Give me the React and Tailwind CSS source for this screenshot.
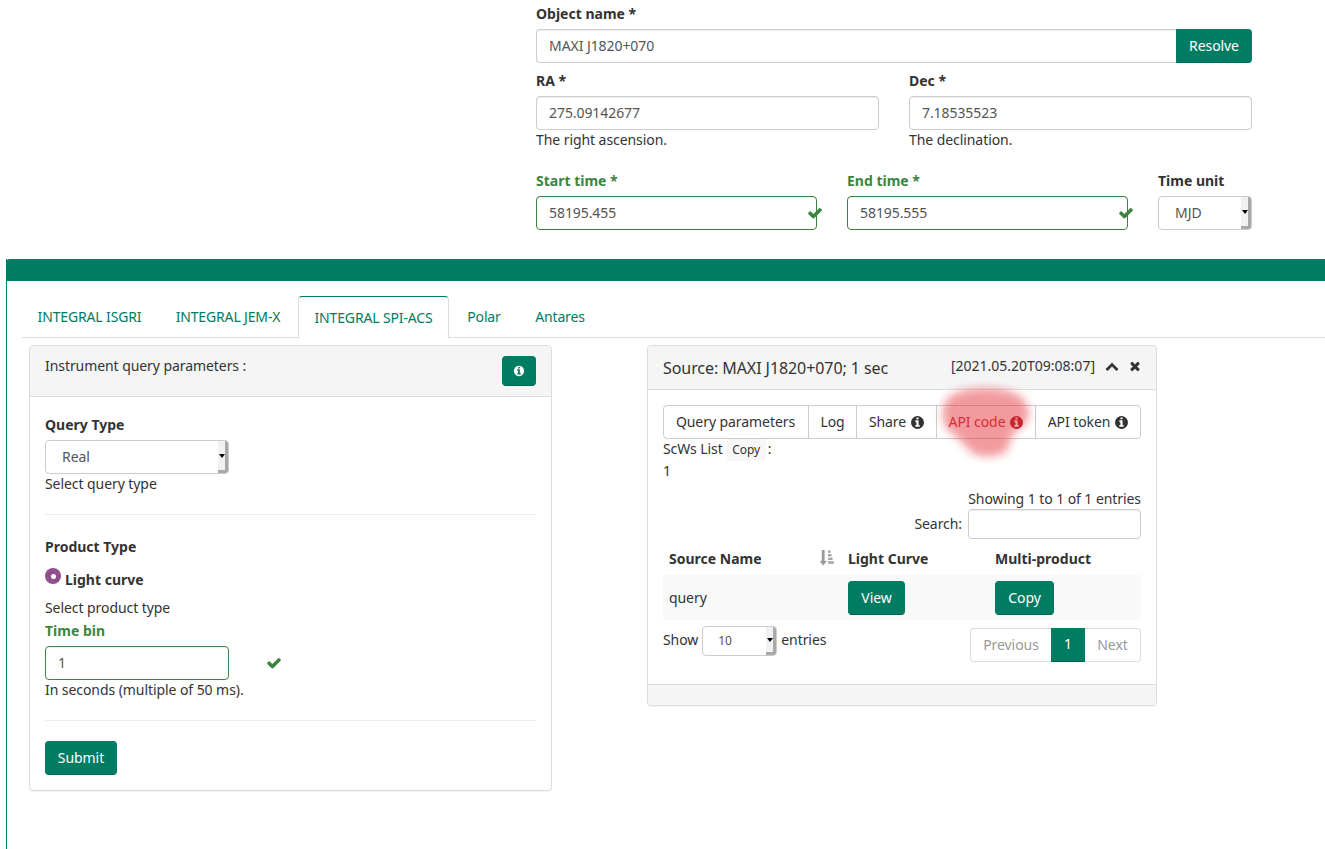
import React from "react";

const inputBase = "rounded-[4px] bg-white px-3 pb-[2px] text-[14px] tracking-[-0.07px] text-[#555] shadow-[inset_0_1px_1px_rgba(0,0,0,0.075)] outline-none";
const inputCls = "h-[34px] border border-[#ccc] " + inputBase;
const okInputCls = "h-[34px] border border-[#3c8541] " + inputBase;
const btnCls = "flex items-center justify-center rounded-[4px] border border-[#007c63] border-b-[#00664f] bg-[#007c63] text-[14px] tracking-[-0.07px] text-white";

const INFO = "M1152 1376v-160q0-14-9-23t-23-9h-96v-512q0-14-9-23t-23-9h-320q-14 0-23 9t-9 23v160q0 14 9 23t23 9h96v320h-96q-14 0-23 9t-9 23v160q0 14 9 23t23 9h448q14 0 23-9t9-23zm-128-896v-160q0-14-9-23t-23-9h-192q-14 0-23 9t-9 23v160q0 14 9 23t23 9h192q14 0 23-9t9-23zm640 416q0 209-103 385.5t-279.5 279.5-385.5 103-385.5-103-279.5-279.5-103-385.5 103-385.5 279.5-279.5 385.5-103 385.5 103 279.5 279.5 103 385.5z";
const CHEVRON = "M1683 1331l-166 165q-19 19-45 19t-45-19l-531-531-531 531q-19 19-45 19t-45-19l-166-165q-19-19-19-45.5t19-45.5l742-741q19-19 45-19t45 19l742 741q19 19 19 45.5t-19 45.5z";
const TIMES = "M1490 1322q0 40-28 68l-136 136q-28 28-68 28t-68-28l-294-294-294 294q-28 28-68 28t-68-28l-136-136q-28-28-28-68t28-68l294-294-294-294q-28-28-28-68t28-68l136-136q28-28 68-28t68 28l294 294 294-294q28-28 68-28t68 28l136 136q28 28 28 68t-28 68l-294 294 294 294q28 28 28 68z";
const CHECK = "M1671 566q0 40-28 68l-724 724-136 136q-28 28-68 28t-68-28l-136-136-362-362q-28-28-28-68t28-68l136-136q28-28 68-28t68 28l294 295 656-657q28-28 68-28t68 28l136 136q28 28 28 68z";

function Fa({ d, size = 14, className = "" }) {
  return (
    <svg width={size} height={size} viewBox="0 0 1792 1792" fill="currentColor" className={"shrink-0 " + className}>
      <path d={d} />
    </svg>
  );
}

function Field({ label, children, className = "", green = false }) {
  return (
    <div className={"flex flex-col " + className}>
      <label className={"mb-[5px] h-5 font-bold leading-5 " + (green ? "text-[#3c8541]" : "")}>{label}</label>
      {children}
    </div>
  );
}

function FakeSelect({ value, className = "", textClass = "pl-4 text-[14px]" }) {
  return (
    <div className={"flex items-stretch justify-between rounded-[4px] border border-[#ccc] bg-white text-[#555] tracking-[-0.07px] " + className}>
      <span className={"self-center " + textClass}>{value}</span>
      <span className="flex w-[10px] items-center justify-center rounded-r-[3px] border-r-[3px] border-b-[3px] border-[#a8a8a8] bg-[#f1f1f1]">
        <span className="h-0 w-0 border-x-[3px] border-t-[4px] border-x-transparent border-t-black" />
      </span>
    </div>
  );
}

function SortIcon() {
  return (
    <svg width="14" height="16" viewBox="0 0 14 16" fill="#a8a8a8" className="mb-[3px]">
      <path d="M1.8 0h2.8v11H7l-3.8 4.5L-.5 11h2.3z" fill="#9a9a9a" />
      <rect x="8" y="0.5" width="2.6" height="2.4" />
      <rect x="8" y="4" width="3.6" height="2.4" />
      <rect x="8" y="7.6" width="4.6" height="2.4" />
      <rect x="8" y="11.2" width="6" height="2.6" />
    </svg>
  );
}

export default function App() {
  return (
    <div className="relative h-[849px] w-[1325px] overflow-hidden bg-white text-[14px] leading-5 text-[#333] [font-family:'Noto_Sans','Open_Sans',sans-serif]">
      {/* Top form */}
      <div className="ml-[536px] flex h-[259px] w-[716px] flex-col pt-1">
        <Field label="Object name *">
          <div className="flex">
            <input readOnly value="MAXI J1820+070" className={inputCls + " min-w-0 flex-1 rounded-r-none border-r-0"} />
            <button className={btnCls + " w-[76px] rounded-l-none"}>Resolve</button>
          </div>
        </Field>
        <div className="mt-[8px] flex gap-[30px]">
          <Field label="RA *" className="flex-1">
            <input readOnly value="275.09142677" className={inputCls} />
            <span className="tracking-[-0.07px]">The right ascension.</span>
          </Field>
          <Field label="Dec *" className="flex-1">
            <input readOnly value="7.18535523" className={inputCls} />
            <span className="tracking-[-0.07px]">The declination.</span>
          </Field>
        </div>
        <div className="mt-[21px] flex gap-[30px]">
          <Field label="Start time *" green className="relative w-[281px]">
            <input readOnly value="58195.455" className={okInputCls} />
            <Fa d={CHECK} size={16} className="absolute right-[-6px] top-[34px] text-[#3c8541]" />
          </Field>
          <Field label="End time *" green className="relative w-[281px]">
            <input readOnly value="58195.555" className={okInputCls} />
            <Fa d={CHECK} size={16} className="absolute right-[-6px] top-[34px] text-[#3c8541]" />
          </Field>
          <Field label="Time unit" className="w-[94px]">
            <FakeSelect value="MJD" className="h-[34px]" />
          </Field>
        </div>
      </div>

      {/* Main panel */}
      <div className="ml-[6px] flex h-[590px] flex-col border-l border-[#007c63]">
        <div className="-ml-px h-[22px] shrink-0 rounded-tl-[4px] bg-[#007c63]" />
        <div className="ml-[15px] mt-[15px] flex h-[42px] shrink-0 border-b border-[#ddd] tracking-[-0.15px] text-[#007c63]">
          <div className="mr-[2px] flex h-[41px] w-[135px] items-center justify-center">INTEGRAL ISGRI</div>
          <div className="mr-[1px] flex h-[41px] w-[138px] items-center justify-center">INTEGRAL JEM-X</div>
          <div className="mr-[2px] flex h-[42px] w-[151px] items-center justify-center rounded-t-[4px] border border-b-0 border-[#ddd] border-t-[#007c63] bg-white">INTEGRAL SPI-ACS</div>
          <div className="mr-[2px] flex h-[41px] w-[66px] items-center justify-center">Polar</div>
          <div className="flex h-[41px] w-[82px] items-center justify-center">Antares</div>
        </div>

        <div className="ml-[22px] mt-[7px] flex items-start">
          {/* Left panel */}
          <div className="h-[446px] w-[523px] shrink-0 rounded-[4px] border border-[#ddd] bg-white shadow-[0_1px_1px_rgba(0,0,0,0.05)]">
            <div className="flex h-[51px] items-start justify-between rounded-t-[3px] border-b border-[#ddd] bg-[#f5f5f5] pl-[15px] pr-[15px] pt-[10px]">
              <span className="tracking-[-0.07px]">Instrument query parameters :</span>
              <button className={btnCls + " h-[30px] w-[34px]"}><Fa d={INFO} size={12} /></button>
            </div>
            <div className="flex flex-col px-[15px] pt-[18px]">
              <label className="mb-[5px] h-5 font-bold">Query Type</label>
              <FakeSelect value="Real" className="h-[34px] w-[184px]" />
              <span className="tracking-[-0.07px]">Select query type</span>
              <hr className="mt-[20px] border-[#eee]" />
              <label className="mt-[22px] h-5 font-bold">Product Type</label>
              <div className="mt-[13px] flex h-5 items-start">
                <span className="mt-[-2px] flex h-4 w-4 items-center justify-center rounded-full bg-[#8f4f8c]">
                  <span className="h-[5px] w-[5px] rounded-full bg-white" />
                </span>
                <span className="ml-1 font-bold">Light curve</span>
              </div>
              <span className="mt-[8px] tracking-[-0.07px]">Select product type</span>
              <label className="mb-[5px] mt-[3px] h-5 font-bold text-[#3c8541]">Time bin</label>
              <div className="flex items-center">
                <input readOnly value="1" className={okInputCls + " w-[184px]"} />
                <Fa d={CHECK} size={16} className="ml-[37px] text-[#3c8541]" />
              </div>
              <span className="tracking-[-0.07px]">In seconds (multiple of 50 ms).</span>
              <hr className="mt-[20px] border-[#eee]" />
              <button className={btnCls + " mt-[20px] h-[34px] w-[72px]"}>Submit</button>
            </div>
          </div>

          {/* Right panel */}
          <div className="relative ml-[95px] h-[361px] w-[510px] shrink-0 rounded-[4px] border border-[#ddd] bg-white shadow-[0_1px_1px_rgba(0,0,0,0.05)]">
            <div className="flex h-[44px] items-start justify-between rounded-t-[3px] border-b border-[#ddd] bg-[#f5f5f5] pl-[15px] pr-[14px]">
              <span className="mt-[11px] text-[16px] leading-[22px] tracking-[-0.07px]">Source: MAXI J1820+070; 1 sec</span>
              <div className="mt-[10px] flex items-center">
                <span>[2021.05.20T09:08:07]</span>
                <Fa d={CHEVRON} size={14} className="ml-[10px]" />
                <Fa d={TIMES} size={14} className="ml-[9px]" />
              </div>
            </div>
            <div className="flex h-[294px] flex-col px-[15px] pt-[15px] tracking-[-0.07px]">
              <div className="flex h-[34px] w-[478px] shrink-0 rounded-[4px] border border-[#ccc] bg-white">
                <span className="flex w-[145px] items-center justify-center border-r border-[#ccc] pr-[1px]">Query parameters</span>
                <span className="flex w-[48px] items-center justify-center border-r border-[#ccc]">Log</span>
                <span className="flex w-[80px] items-center justify-center gap-1 border-r border-[#ccc] pl-[1px]">Share <Fa d={INFO} size={15} /></span>
                <span className="flex w-[99px] items-center justify-center gap-1 border-r border-[#ccc] pl-[1px] text-[#d0333a]">API code <Fa d={INFO} size={15} className="text-[#b3282f]" /></span>
                <span className="flex flex-1 items-center justify-center gap-1 pl-[1px]">API token <Fa d={INFO} size={15} /></span>
              </div>
              <div className="flex h-[22px] items-start">
                <span>ScWs List</span>
                <span className="ml-[4px] flex h-[22px] w-[39px] items-center justify-center rounded-[3px] bg-[#f7f7f7] text-[12px]">Copy</span>
                <span className="ml-[2px]">:</span>
              </div>
              <span>1</span>
              <span className="mt-[8px] self-end">Showing 1 to 1 of 1 entries</span>
              <div className="flex items-center justify-end">
                <span className="mr-[6px]">Search:</span>
                <input readOnly className={"h-[30px] w-[173px] border border-[#ccc] " + inputBase} />
              </div>
              <div className="grid h-[36px] grid-cols-[185px_147px_146px] items-end pb-[6px] font-bold tracking-normal">
                <div className="flex items-center justify-between pl-[6px] pr-[14px]">
                  <span>Source Name</span>
                  <SortIcon />
                </div>
                <span>Light Curve</span>
                <span>Multi-product</span>
              </div>
              <div className="grid h-[45px] grid-cols-[185px_147px_146px] items-center bg-[#f9f9f9]">
                <span className="pl-[6px]">query</span>
                <button className={btnCls + " h-[34px] w-[57px]"}>View</button>
                <button className={btnCls + " h-[34px] w-[59px]"}>Copy</button>
              </div>
              <div className="mt-[6px] flex items-start justify-between">
                <div className="flex items-center">
                  <span className="pb-[2px]">Show</span>
                  <FakeSelect value="10" className="ml-[4px] h-[30px] w-[75px]" textClass="pl-[15px] text-[12px]" />
                  <span className="ml-[4px] pb-[2px]">entries</span>
                </div>
                <div className="mt-[2px] flex h-[34px] items-stretch">
                  <span className="flex w-[81px] items-center justify-center rounded-l-[4px] border border-r-0 border-[#ddd] pb-[1px] text-[#999]">Previous</span>
                  <span className="flex w-[34px] items-center justify-center border-b border-[#00664f] bg-[#007c63] pb-[1px] text-white">1</span>
                  <span className="flex w-[56px] items-center justify-center rounded-r-[4px] border border-l-0 border-[#ddd] pb-[1px] text-[#999]">Next</span>
                </div>
              </div>
            </div>
            <div className="h-[21px] rounded-b-[3px] border-t border-[#ddd] bg-[#f5f5f5]" />
            {/* red scribble highlight lying over the API code button */}
            <svg width="130" height="110" viewBox="0 0 130 110" className="pointer-events-none absolute left-[278px] top-[25px]">
              <defs>
                <filter id="glow" x="-30%" y="-30%" width="160%" height="160%">
                  <feGaussianBlur stdDeviation="4.5" />
                </filter>
              </defs>
              <path d="M26 24 C38 16 76 14 92 24 C104 32 106 46 98 54 C88 60 84 66 82 78 C76 86 58 88 46 82 C40 76 36 70 28 64 C18 58 16 48 17 38 C18 32 21 27 26 24Z" fill="#e3262e" fillOpacity="0.46" filter="url(#glow)" />
            </svg>
          </div>
        </div>
      </div>
    </div>
  );
}
